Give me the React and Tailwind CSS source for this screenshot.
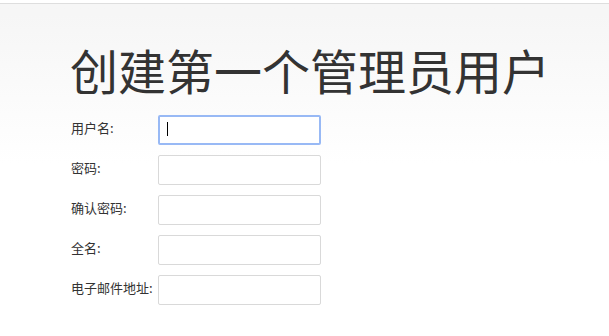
const fields = [
  { id: "username", label: "用户名:", type: "text", focused: true },
  { id: "password", label: "密码:", type: "password" },
  { id: "confirm", label: "确认密码:", type: "password" },
  { id: "fullname", label: "全名:", type: "text" },
  { id: "email", label: "电子邮件地址:", type: "email" },
];

const App = () => {
  return (
    <div
      className="min-h-[336px] bg-white text-[#333]"
      style={{ fontFamily: '"Noto Sans CJK SC", "Noto Sans", sans-serif' }}
    >
      <div className="h-[3px] bg-white" />
      <div className="h-px bg-[#dedede]" />
      <div className="bg-gradient-to-b from-[#f6f6f6] from-[10px] to-white to-[160px] pb-8">
        <h1 className="pt-[40px] pl-[11px] text-center text-[48px] font-normal leading-[50px] text-[#333]">
          创建第一个管理员用户
        </h1>
        <div className="mt-[21px] ml-[71px] flex flex-col gap-[10px]">
          {fields.map((f) => (
            <div key={f.id} className="flex items-center">
              <label
                htmlFor={f.id}
                className="w-[87px] pb-[4px] text-[13px] leading-4 text-[#333]"
              >
                {f.label}
              </label>
              {f.focused ? (
                <div className="relative h-[30px] w-[163px] rounded-[2px] border-2 border-[#98b9f5] bg-white">
                  <span className="absolute left-[7px] top-[5px] h-[14px] w-px bg-black" />
                </div>
              ) : (
                <input
                  id={f.id}
                  type={f.type}
                  className="h-[30px] w-[163px] rounded-[2px] border border-[#d9d9d9] bg-white px-2 text-[13px] outline-none"
                />
              )}
            </div>
          ))}
        </div>
      </div>
    </div>
  );
};

export default App;
